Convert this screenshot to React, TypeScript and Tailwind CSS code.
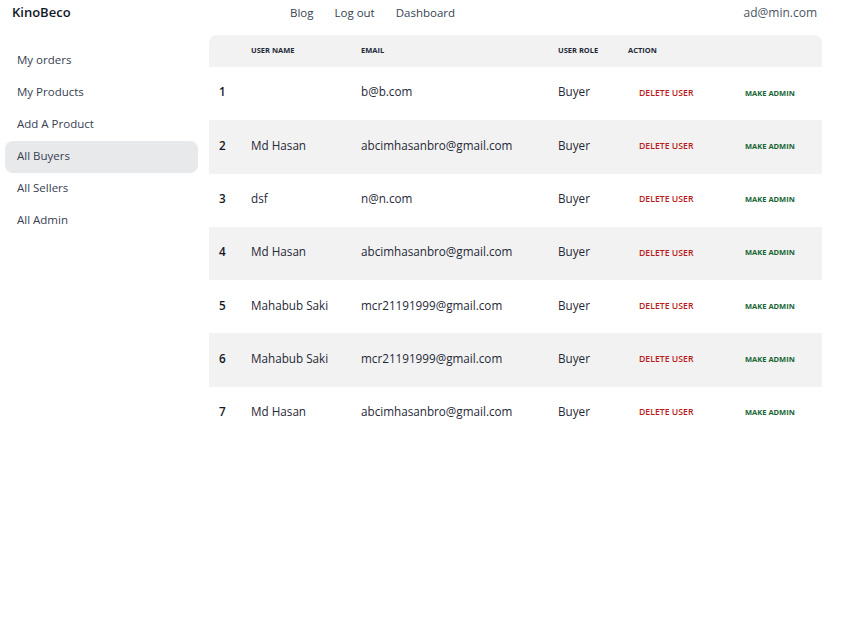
import React from 'react';

interface Buyer {
  name: string;
  email: string;
  role: string;
}

const buyers: Buyer[] = [
  { name: '', email: 'b@b.com', role: 'Buyer' },
  { name: 'Md Hasan', email: 'abcimhasanbro@gmail.com', role: 'Buyer' },
  { name: 'dsf', email: 'n@n.com', role: 'Buyer' },
  { name: 'Md Hasan', email: 'abcimhasanbro@gmail.com', role: 'Buyer' },
  { name: 'Mahabub Saki', email: 'mcr21191999@gmail.com', role: 'Buyer' },
  { name: 'Mahabub Saki', email: 'mcr21191999@gmail.com', role: 'Buyer' },
  { name: 'Md Hasan', email: 'abcimhasanbro@gmail.com', role: 'Buyer' },
];

const sideLinks = ['My orders', 'My Products', 'Add A Product', 'All Buyers', 'All Sellers', 'All Admin'];

const App = () => {
  return (
    <div className="min-h-[627px] bg-white text-[#1f2937] font-['Open_Sans',sans-serif]">
      {/* navbar */}
      <nav className="h-[25px] flex items-center px-3 text-[11.5px]">
        <div className="w-[270px] text-[13px] font-semibold text-[#111827]">KinoBeco</div>
        <div className="flex gap-[21px] ml-[8px] text-[#374151]">
          <span>Blog</span>
          <span>Log out</span>
          <span>Dashboard</span>
        </div>
        <div className="ml-auto mr-[34px] text-[12px] text-[#4b5563]">ad@min.com</div>
      </nav>

      <div className="flex">
        {/* sidebar */}
        <aside className="w-[209px] pl-[5px] pr-[11px] pt-[20px] text-[11.5px] text-[#374151]">
          {sideLinks.map((link) => (
            <div
              key={link}
              className={`h-[32px] flex items-center px-3 pb-[2px] rounded-lg ${
                link === 'All Buyers' ? 'bg-[#e8e9eb]' : ''
              }`}
            >
              {link}
            </div>
          ))}
        </aside>

        {/* table */}
        <main className="pt-[10px] w-[613px]">
          <table className="w-full border-collapse text-[11.7px]">
            <thead>
              <tr className="h-[32px] text-[7.5px] font-bold uppercase text-[#1f2937]">
                <th className="w-[32px] bg-[#f2f2f2] rounded-tl-lg"></th>
                <th className="w-[110px] bg-[#f2f2f2] text-left pl-[10px]">User Name</th>
                <th className="w-[197px] bg-[#f2f2f2] text-left pl-[10px]">Email</th>
                <th className="w-[70px] bg-[#f2f2f2] text-left pl-[10px]">User Role</th>
                <th className="w-[106px] bg-[#f2f2f2] text-left pl-[10px]">Action</th>
                <th className="bg-[#f2f2f2] rounded-tr-lg"></th>
              </tr>
            </thead>
            <tbody>
              {buyers.map((b, i) => (
                <tr key={i} className={`h-[53.3px] ${i % 2 === 1 ? 'bg-[#f2f2f2]' : 'bg-white'}`}>
                  <td className="pl-[10px] pb-[3px] font-semibold text-[#111827]">{i + 1}</td>
                  <td className="pl-[10px] pb-[3px]">{b.name}</td>
                  <td className="pl-[10px] pb-[3px]">{b.email}</td>
                  <td className="pl-[10px] pb-[3px]">{b.role}</td>
                  <td className="pl-[21px] pb-[1px] text-[8.7px] font-semibold text-[#b91c1c]">DELETE USER</td>
                  <td className="pl-[21px] pb-[1px] text-[7.5px] font-bold text-[#166534]">MAKE ADMIN</td>
                </tr>
              ))}
            </tbody>
          </table>
        </main>
      </div>
    </div>
  );
};

export default App;
